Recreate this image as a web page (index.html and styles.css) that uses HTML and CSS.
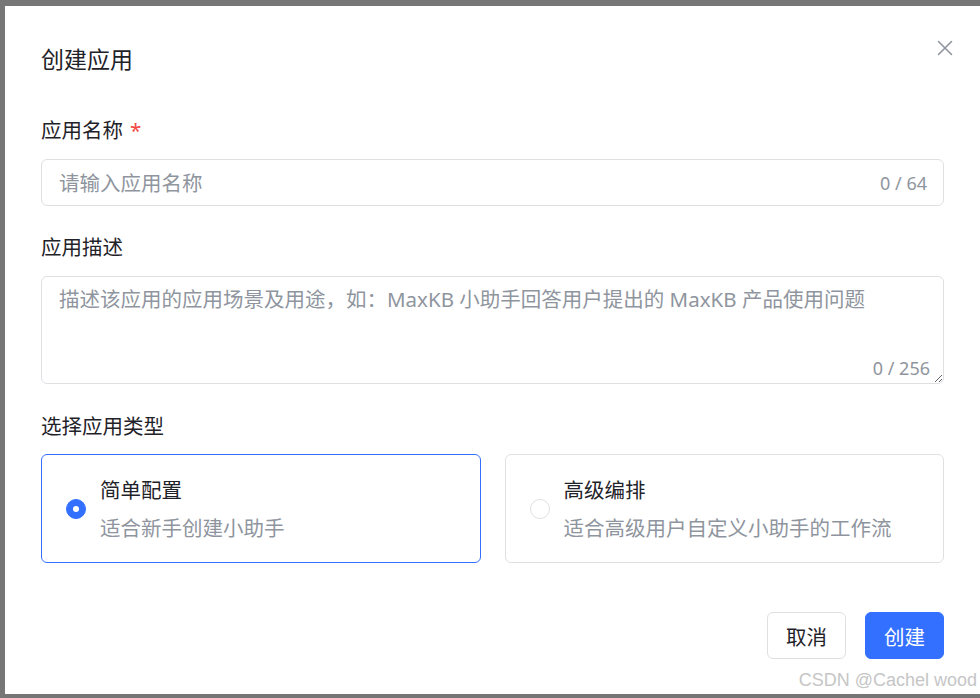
FILE: index.html
```html
<!DOCTYPE html>
<html lang="zh-CN">
<head>
<meta charset="utf-8">
<title>创建应用</title>
<link rel="stylesheet" href="styles.css">
</head>
<body>
<div class="dialog">
  <div class="dialog-header">
    <h2 class="dialog-title">创建应用</h2>
    <button class="close-btn" aria-label="关闭">
      <svg width="16" height="16" viewBox="0 0 16 16"><path d="M1.5 1.5 L14.5 14.5 M14.5 1.5 L1.5 14.5" stroke="#8f959e" stroke-width="1.6" stroke-linecap="round" fill="none"/></svg>
    </button>
  </div>

  <div class="form-item">
    <label class="form-label">应用名称<span class="required">*</span></label>
    <div class="input-wrap">
      <input class="text-input" type="text" placeholder="请输入应用名称">
      <span class="counter">0 / 64</span>
    </div>
  </div>

  <div class="form-item">
    <label class="form-label">应用描述</label>
    <div class="textarea-wrap">
      <textarea class="text-area" placeholder="描述该应用的应用场景及用途，如：MaxKB 小助手回答用户提出的 MaxKB 产品使用问题"></textarea>
      <span class="counter counter-area">0 / 256</span>
    </div>
  </div>

  <div class="form-item form-item-last">
    <label class="form-label">选择应用类型</label>
    <div class="type-grid">
      <div class="type-card active">
        <span class="radio checked"></span>
        <div class="type-text">
          <div class="type-title">简单配置</div>
          <div class="type-desc">适合新手创建小助手</div>
        </div>
      </div>
      <div class="type-card">
        <span class="radio"></span>
        <div class="type-text">
          <div class="type-title">高级编排</div>
          <div class="type-desc">适合高级用户自定义小助手的工作流</div>
        </div>
      </div>
    </div>
  </div>

  <div class="dialog-footer">
    <button class="btn">取消</button>
    <button class="btn btn-primary">创建</button>
  </div>
</div>
<div class="watermark">CSDN @Cachel wood</div>
</body>
</html>
```

FILE: styles.css
```css
* { box-sizing: border-box; }

html, body {
  margin: 0;
  padding: 0;
  height: 698px;
  overflow: hidden;
}

body {
  background: #767676;
  font-family: "Noto Sans", "Noto Sans CJK SC", sans-serif;
  color: #1f2329;
  padding: 6px 0 0 5px;
  position: relative;
}

.dialog {
  background: #ffffff;
  width: 975px;
  height: 688px;
  padding: 0 36px;
}

.dialog-header {
  display: flex;
  align-items: flex-start;
  justify-content: space-between;
  padding-top: 39px;
  height: 68px;
}

.dialog-title {
  margin: 0;
  font-size: 23px;
  font-weight: 400;
  line-height: 28px;
  color: #1f2329;
}

.close-btn {
  border: none;
  background: none;
  padding: 0;
  margin: -5px -9px 0 0;
  width: 16px;
  height: 16px;
  cursor: pointer;
}

.close-btn svg { display: block; }

.form-item {
  margin-top: 42px;
}

.form-item + .form-item {
  margin-top: 27px;
}

.form-label {
  display: block;
  font-size: 20.5px;
  line-height: 28px;
  margin-bottom: 15px;
  color: #1f2329;
}

.required {
  color: #f54a45;
  margin-left: 7px;
}

.input-wrap {
  display: flex;
  align-items: center;
  height: 47px;
  border: 1px solid #dee0e3;
  border-radius: 6px;
  padding: 0 16px 0 17px;
}

.text-input {
  flex: 1;
  border: none;
  outline: none;
  font-family: inherit;
  font-size: 20.5px;
  color: #1f2329;
  padding: 0;
  background: transparent;
}

.text-input::placeholder,
.text-area::placeholder {
  color: #8f959e;
}

.counter {
  font-size: 18px;
  color: #8f959e;
}

.textarea-wrap {
  position: relative;
}

.text-area {
  display: block;
  width: 100%;
  height: 108px;
  border: 1px solid #dee0e3;
  border-radius: 6px;
  padding: 8px 16px 8px 17px;
  font-family: inherit;
  font-size: 20.5px;
  line-height: 28px;
  color: #1f2329;
  resize: vertical;
  outline: none;
}

.counter-area {
  position: absolute;
  right: 14px;
  bottom: 4px;
  line-height: 24px;
}

.form-item-last {
  margin-top: 28px !important;
}

.form-item-last .form-label {
  margin-bottom: 14px;
}

.type-grid {
  display: grid;
  grid-template-columns: 1fr 1fr;
  gap: 24px;
}

.type-card {
  display: flex;
  align-items: center;
  gap: 14px;
  height: 109px;
  border: 1px solid #dee0e3;
  border-radius: 6px;
  padding: 0 24px;
}

.type-card.active {
  border-color: #3370ff;
}

.radio {
  flex: none;
  width: 20px;
  height: 20px;
  border-radius: 50%;
  border: 1px solid #dee0e3;
  background: #fff;
  display: flex;
  align-items: center;
  justify-content: center;
}

.radio.checked {
  border-color: #3370ff;
  background: #3370ff;
}

.radio.checked::after {
  content: "";
  width: 6px;
  height: 6px;
  border-radius: 50%;
  background: #fff;
}

.type-text {
  display: flex;
  flex-direction: column;
  gap: 10px;
}

.type-title {
  font-size: 20.5px;
  line-height: 28px;
  color: #1f2329;
}

.type-desc {
  font-size: 20.5px;
  line-height: 28px;
  color: #8f959e;
}

.dialog-footer {
  display: flex;
  justify-content: flex-end;
  gap: 19px;
  margin-top: 49px;
}

.btn {
  width: 79px;
  height: 47px;
  border: 1px solid #dee0e3;
  border-radius: 6px;
  background: #fff;
  font-family: inherit;
  font-size: 20.5px;
  color: #1f2329;
  padding: 0;
  cursor: pointer;
}

.btn-primary {
  background: #3370ff;
  border-color: #3370ff;
  color: #fff;
}

.watermark {
  position: absolute;
  right: 3px;
  top: 669px;
  font-family: "Liberation Sans", Arial, sans-serif;
  font-size: 18px;
  line-height: 22px;
  color: #c6c6c6;
}
```
